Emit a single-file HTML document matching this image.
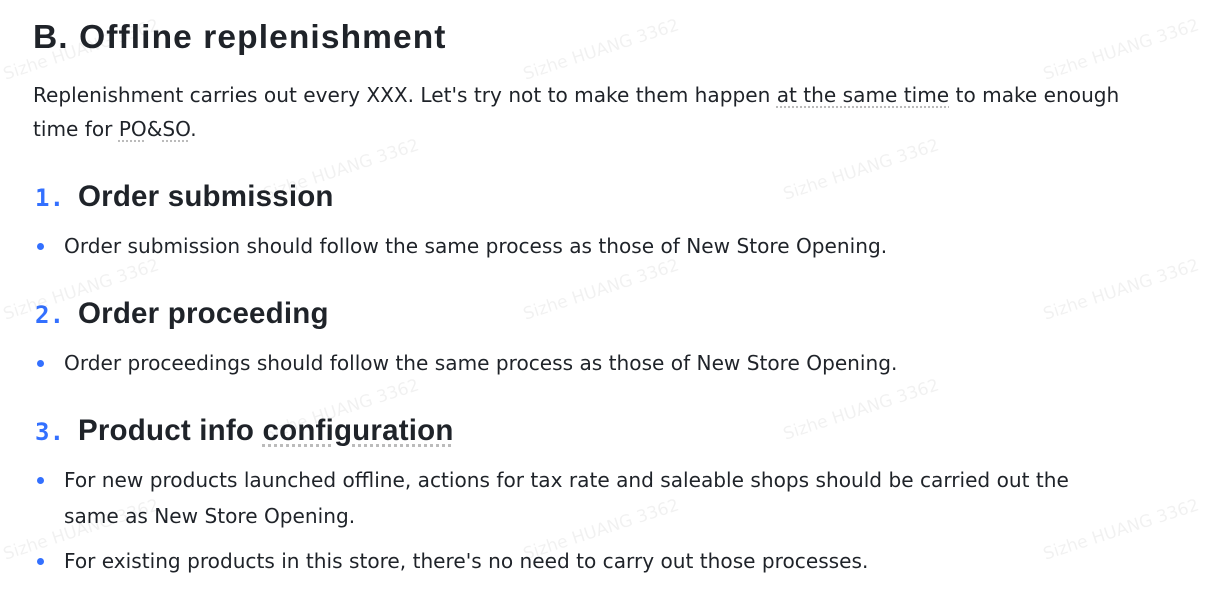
<!DOCTYPE html>
<html><head><meta charset="utf-8"><style>
body{margin:0;background:#fff;width:1214px;height:609px;overflow:hidden;position:relative;color:#1f2329;font-family:"DejaVu Sans","Liberation Sans",sans-serif;}
.t{position:absolute;white-space:nowrap;}
.h1{left:33px;top:16px;font:bold 33.5px/44px "Liberation Sans",sans-serif;letter-spacing:1.1px;}
.p{font-size:20.1px;line-height:34px;}
.h2{left:35px;font:bold 29.5px/40px "Liberation Sans",sans-serif;letter-spacing:0.2px;}
.h2 .n{color:#3370ff;font:bold 24px "DejaVu Sans Mono",monospace;display:inline-block;width:43px;}
.dot{position:absolute;left:37px;width:7px;height:7px;border-radius:50%;background:#3370ff;}
u{text-decoration:underline dotted #bbb;text-underline-offset:4px;}
.wm{position:absolute;color:#000;opacity:.05;font-size:17px;transform:rotate(-18deg);}
</style></head><body>
<div class="t h1">B. Offline replenishment</div>
<div class="t p" style="left:33px;top:78px">Replenishment carries out every XXX. Let's try not to make them happen <u>at the same time</u> to make enough</div>
<div class="t p" style="left:33px;top:112px">time for <u>PO</u>&amp;<u>SO</u>.</div>
<div class="t h2" style="top:177px"><span class="n">1.</span>Order submission</div>
<div class="dot" style="top:243px"></div>
<div class="t p" style="left:64px;top:229px">Order submission should follow the same process as those of New Store Opening.</div>
<div class="t h2" style="top:294px"><span class="n">2.</span>Order proceeding</div>
<div class="dot" style="top:360px"></div>
<div class="t p" style="left:64px;top:346px">Order proceedings should follow the same process as those of New Store Opening.</div>
<div class="t h2" style="top:411px"><span class="n">3.</span>Product info <u>configuration</u></div>
<div class="dot" style="top:477px"></div>
<div class="t p" style="left:64px;top:463px">For new products launched offline, actions for tax rate and saleable shops should be carried out the</div>
<div class="t p" style="left:64px;top:499px">same as New Store Opening.</div>
<div class="dot" style="top:558px"></div>
<div class="t p" style="left:64px;top:544px">For existing products in this store, there's no need to carry out those processes.</div>
<div class="wm" style="left:0;top:40px">Sizhe HUANG 3362</div>
<div class="wm" style="left:260px;top:160px">Sizhe HUANG 3362</div>
<div class="wm" style="left:520px;top:40px">Sizhe HUANG 3362</div>
<div class="wm" style="left:780px;top:160px">Sizhe HUANG 3362</div>
<div class="wm" style="left:1040px;top:40px">Sizhe HUANG 3362</div>
<div class="wm" style="left:0;top:280px">Sizhe HUANG 3362</div>
<div class="wm" style="left:520px;top:280px">Sizhe HUANG 3362</div>
<div class="wm" style="left:1040px;top:280px">Sizhe HUANG 3362</div>
<div class="wm" style="left:260px;top:400px">Sizhe HUANG 3362</div>
<div class="wm" style="left:780px;top:400px">Sizhe HUANG 3362</div>
<div class="wm" style="left:0;top:520px">Sizhe HUANG 3362</div>
<div class="wm" style="left:520px;top:520px">Sizhe HUANG 3362</div>
<div class="wm" style="left:1040px;top:520px">Sizhe HUANG 3362</div>
</body></html>
